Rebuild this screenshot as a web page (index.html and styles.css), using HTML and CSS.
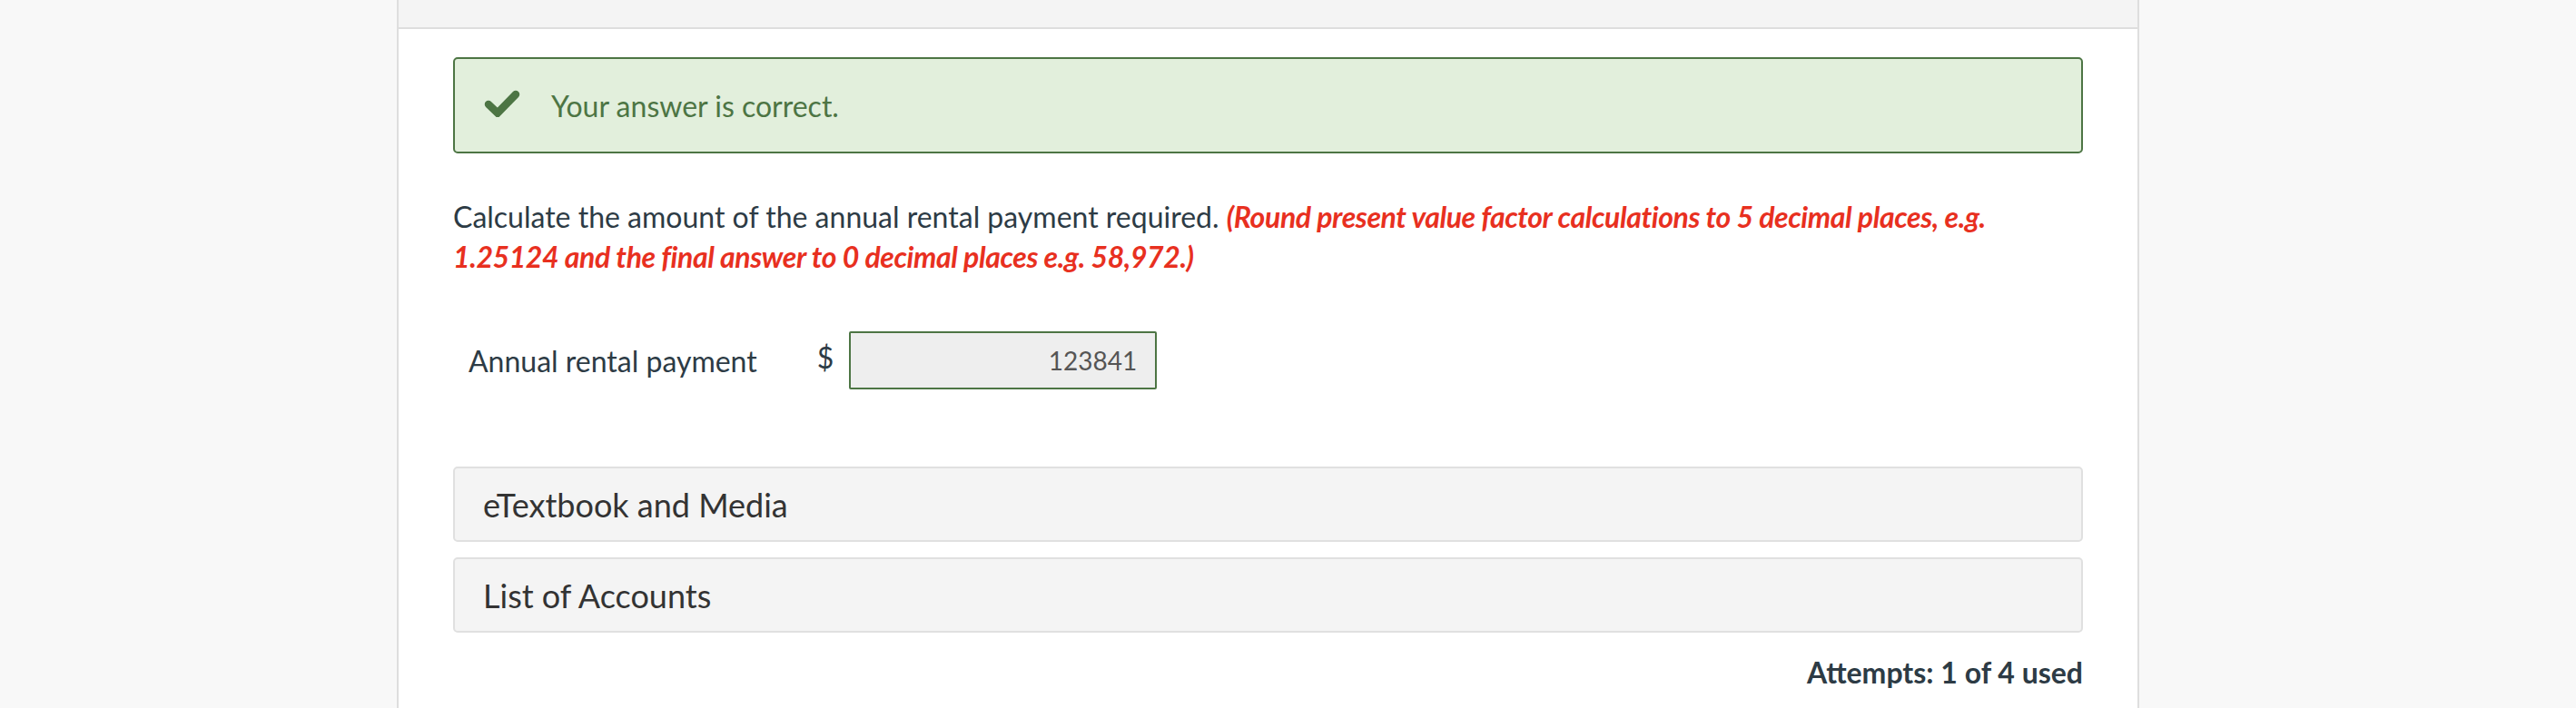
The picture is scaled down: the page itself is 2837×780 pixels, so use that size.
FILE: index.html
```html
<!DOCTYPE html>
<html lang="en">
<head>
<meta charset="utf-8">
<title>Question</title>
<link rel="stylesheet" href="styles.css">
</head>
<body>
<div class="panel">
  <div class="topbar"></div>
  <div class="content">
    <div class="alert-success">
      <svg class="check" width="40" height="30" viewBox="0 0 40 30" aria-hidden="true">
        <path d="M5 16 L15 25.5 L35 5" fill="none" stroke="#4d7544" stroke-width="8.5" stroke-linecap="round" stroke-linejoin="miter"/>
      </svg>
      <span class="alert-text">Your answer is correct.</span>
    </div>

    <p class="question">Calculate the amount of the annual rental payment required. <em class="hint">(Round present value factor calculations to 5 decimal places, e.g. 1.25124 and the final answer to 0 decimal places e.g. 58,972.)</em></p>

    <div class="answer-row">
      <span class="answer-label">Annual rental payment</span>
      <span class="currency">$</span>
      <div class="answer-input">123841</div>
    </div>

    <div class="resources">
      <div class="resource">eTextbook and Media</div>
      <div class="resource">List of Accounts</div>
    </div>

    <div class="attempts">Attempts: 1 of 4 used</div>
  </div>
</div>
</body>
</html>
```
FILE: styles.css
```css
html, body {
  margin: 0;
  padding: 0;
}
body {
  background: #f8f8f8;
  font-family: Lato, "Open Sans", "Liberation Sans", sans-serif;
  color: #2d3b45;
}
.panel {
  margin-left: 437px;
  width: 1919px;
  box-sizing: border-box;
  min-height: 780px;
  background: #ffffff;
  border-left: 2px solid #dedede;
  border-right: 2px solid #dedede;
}
.topbar {
  height: 30px;
  background: #f4f4f4;
  border-bottom: 2px solid #dedede;
}
.content {
  padding: 31px 60px 0 60px;
}
.alert-success {
  box-sizing: border-box;
  height: 106px;
  display: flex;
  align-items: center;
  padding-left: 32px;
  background: #e2efdc;
  border: 2px solid #4d7544;
  border-radius: 5px;
}
.check {
  display: block;
  margin-top: -4px;
}
.alert-text {
  margin-left: 34px;
  font-size: 32px;
  color: #4d7544;
}
.question {
  margin: 48px 0 0 0;
  font-size: 32px;
  line-height: 44px;
}
.hint {
  color: #e8301f;
  font-weight: bold;
  font-style: italic;
  letter-spacing: -0.4px;
}
.answer-row {
  display: flex;
  align-items: center;
  margin-top: 60px;
  padding-left: 17px;
}
.answer-label {
  font-size: 32px;
}
.currency {
  font-size: 32px;
  margin-left: 66px;
  margin-right: 17px;
  position: relative;
  top: -4px;
}
.answer-input {
  box-sizing: border-box;
  width: 339px;
  height: 64px;
  background: #eeeeee;
  border: 2px solid #4d7544;
  border-radius: 2px;
  color: #555555;
  font-size: 28px;
  padding-right: 20px;
  display: flex;
  align-items: center;
  justify-content: flex-end;
}
.resources {
  margin-top: 85px;
  display: flex;
  flex-direction: column;
  gap: 17px;
}
.resource {
  box-sizing: border-box;
  height: 83px;
  display: flex;
  align-items: center;
  padding-left: 31px;
  background: #f4f4f4;
  border: 2px solid #e0e0e0;
  border-radius: 5px;
  font-size: 36px;
  color: #333333;
}
.attempts {
  margin-top: 24px;
  text-align: right;
  font-weight: bold;
  font-size: 32px;
}
```
